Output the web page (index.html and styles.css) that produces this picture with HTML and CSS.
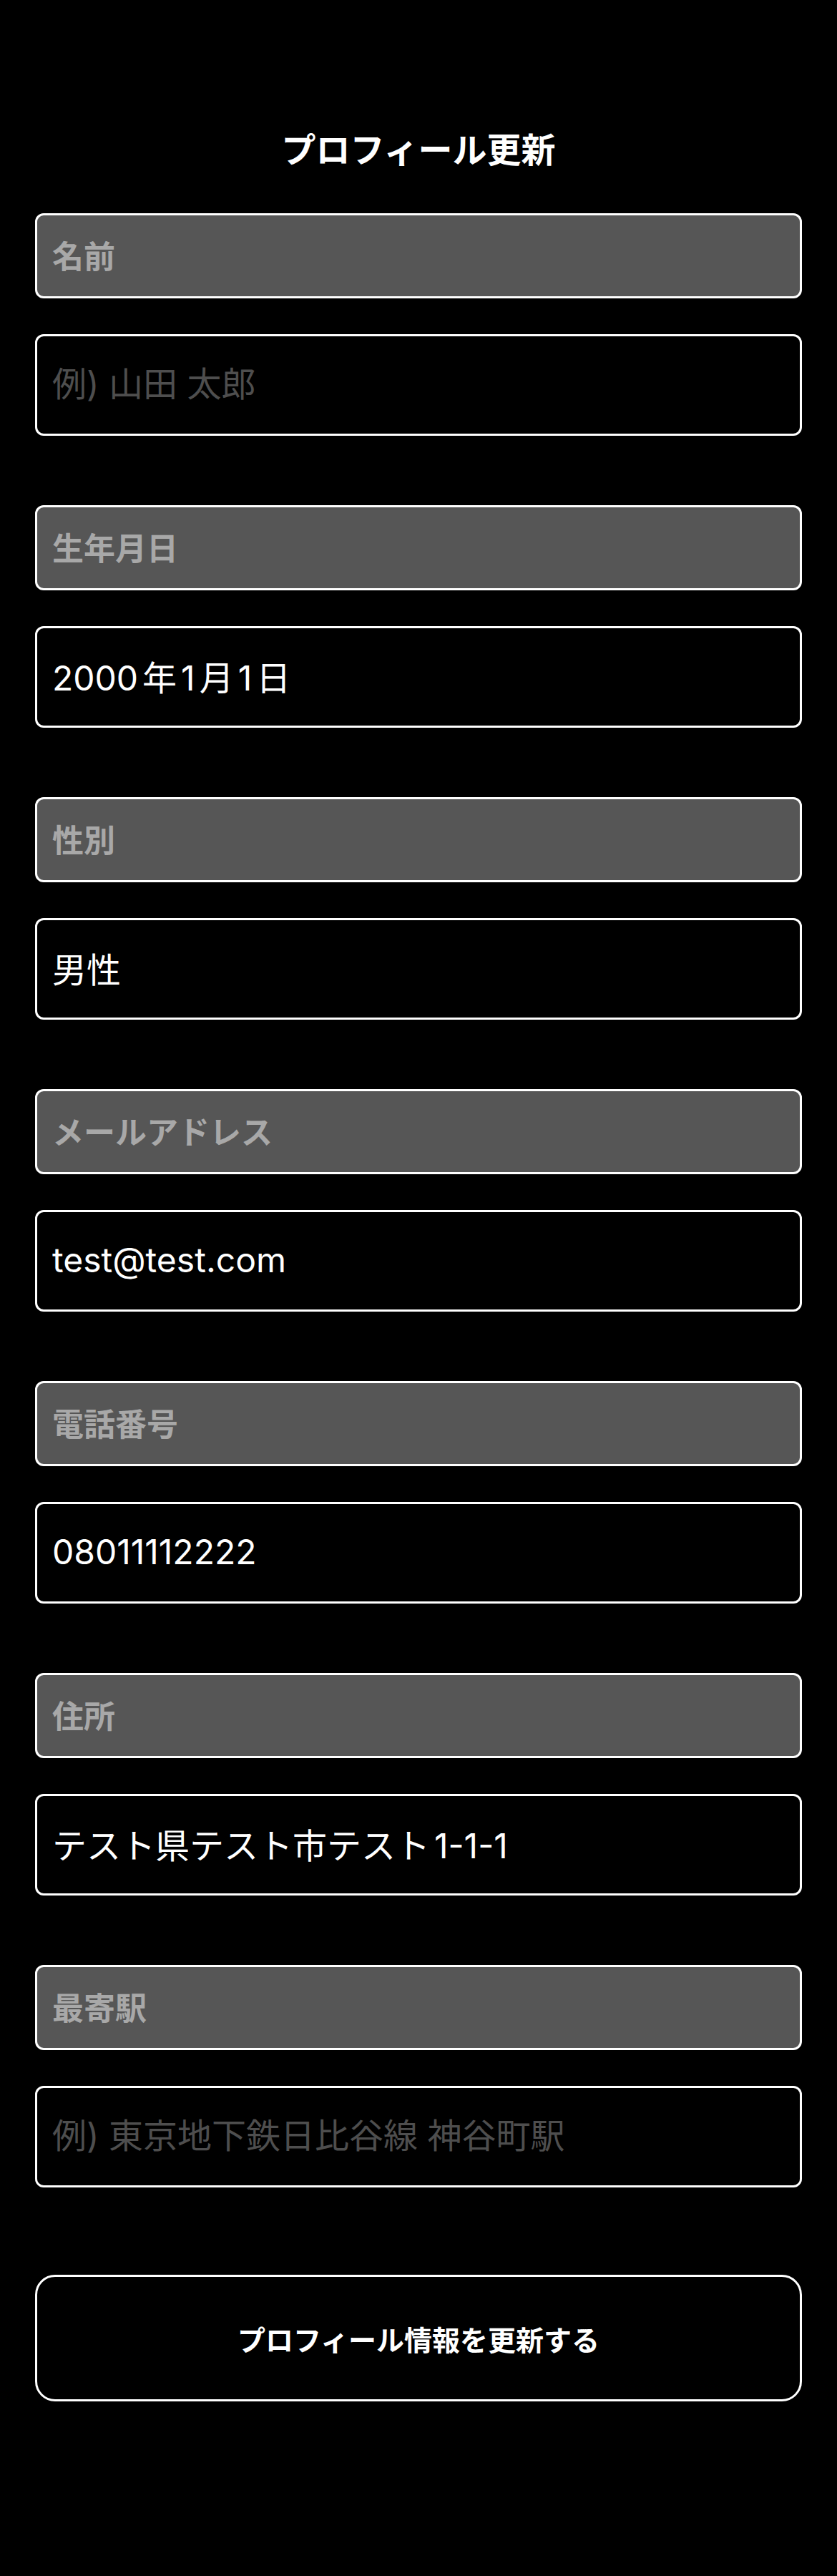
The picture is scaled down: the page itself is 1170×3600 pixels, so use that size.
FILE: index.html
```html
<!DOCTYPE html>
<html lang="ja">
<head>
<meta charset="utf-8">
<title>プロフィール更新</title>
<link rel="stylesheet" href="styles.css">
</head>
<body>
<main class="page">
  <h1 class="title">プロフィール更新</h1>
  <form class="form">
    <div class="field">
      <label class="field-label" for="name">名前</label>
      <input class="field-input" id="name" type="text" placeholder="例) 山田 太郎">
    </div>
    <div class="field">
      <label class="field-label" for="birth">生年月日</label>
      <input class="field-input" id="birth" type="text" value="2000年1月1日">
    </div>
    <div class="field">
      <label class="field-label" for="gender">性別</label>
      <input class="field-input" id="gender" type="text" value="男性">
    </div>
    <div class="field">
      <label class="field-label" for="email">メールアドレス</label>
      <input class="field-input" id="email" type="text" value="test@test.com">
    </div>
    <div class="field">
      <label class="field-label" for="tel">電話番号</label>
      <input class="field-input" id="tel" type="text" value="08011112222">
    </div>
    <div class="field">
      <label class="field-label" for="addr">住所</label>
      <input class="field-input" id="addr" type="text" value="テスト県テスト市テスト1-1-1">
    </div>
    <div class="field">
      <label class="field-label" for="station">最寄駅</label>
      <input class="field-input" id="station" type="text" placeholder="例) 東京地下鉄日比谷線 神谷町駅">
    </div>
    <button class="submit" type="button">プロフィール情報を更新する</button>
  </form>
</main>
</body>
</html>
```
FILE: styles.css
```css
* {
  box-sizing: border-box;
}

html, body {
  margin: 0;
  background: #000;
}

body {
  font-family: "Inter", "Noto Sans CJK JP", sans-serif;
  color: #fff;
}

.page {
  padding: 178px 49px 200px;
}

.title {
  margin: 0 0 64px;
  height: 56px;
  line-height: 56px;
  font-size: 48px;
  font-weight: 700;
  text-align: center;
  font-family: "Noto Sans CJK JP", sans-serif;
}

.form {
  display: flex;
  flex-direction: column;
  gap: 97px;
}

.field {
  display: flex;
  flex-direction: column;
  gap: 50px;
}

.field-label {
  display: flex;
  align-items: center;
  height: 119px;
  padding: 0 21px 4px;
  background: #565656;
  border: 3px solid #fff;
  border-radius: 12px;
  color: #a8a8a8;
  font-size: 44px;
  font-weight: 700;
  font-family: "Noto Sans CJK JP", sans-serif;
}

.field-input {
  display: block;
  width: 100%;
  height: 142px;
  padding: 0 21px 4px;
  background: #000;
  border: 3px solid #fff;
  border-radius: 12px;
  color: #fff;
  font-family: "Inter", "Noto Sans CJK JP", sans-serif;
  font-size: 48px;
  font-weight: 400;
  text-autospace: normal;
  outline: none;
}

.field-input::placeholder {
  color: #4e4e4e;
  opacity: 1;
}

.submit {
  margin-top: 25px;
  height: 177px;
  width: 100%;
  background: #000;
  border: 3px solid #fff;
  border-radius: 28px;
  color: #fff;
  font-family: "Noto Sans CJK JP", sans-serif;
  font-size: 39px;
  font-weight: 700;
}
```
